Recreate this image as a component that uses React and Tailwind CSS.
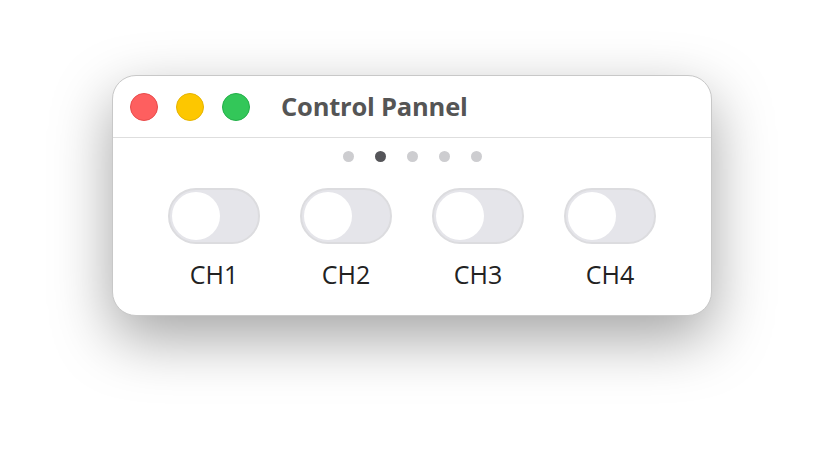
import React from "react"

const CHANNELS = ["CH1", "CH2", "CH3", "CH4"]

function Toggle() {
  return (
    <div className="w-[92px] h-[56px] rounded-full bg-[#e5e5ea] border-2 border-[#dcdcdf] flex items-center px-[2px]">
      <div className="w-[48px] h-[48px] rounded-full bg-white" />
    </div>
  )
}

export default function App() {
  return (
    <div className="w-[824px] h-[464px] bg-white flex justify-center pt-[75px]" style={{ fontFamily: '"Open Sans", "Noto Sans", sans-serif' }}>
      <div className="w-[600px] h-[241px] rounded-[24px] bg-white border border-[#c8c8c8] shadow-[0_22px_60px_rgba(0,0,0,0.36)] flex flex-col">
        <div className="h-[62px] border-b border-[#dedede] flex items-center pl-[17px]">
          <div className="flex gap-[18px]">
            <span className="w-[28px] h-[28px] rounded-full bg-[#fe5f5f] border border-[#e84a4a]" />
            <span className="w-[28px] h-[28px] rounded-full bg-[#fdc700] border border-[#e6b400]" />
            <span className="w-[28px] h-[28px] rounded-full bg-[#33c759] border border-[#22b048]" />
          </div>
          <span className="ml-[31px] text-[25.5px] font-bold text-[#555555] tracking-[-0.2px]">Control Pannel</span>
        </div>
        <div className="flex justify-center gap-[21px] mt-[13px]">
          {[0, 1, 2, 3, 4].map((i) => (
            <span key={i} className={`w-[11px] h-[11px] rounded-full ${i === 1 ? "bg-[#555559]" : "bg-[#cdcdd0]"}`} />
          ))}
        </div>
        <div className="flex justify-center gap-[40px] mt-[26px]">
          {CHANNELS.map((ch) => (
            <div key={ch} className="flex flex-col items-center">
              <Toggle />
              <span className="mt-[13px] text-[25px] leading-[34px] text-[#222222]">{ch}</span>
            </div>
          ))}
        </div>
      </div>
    </div>
  )
}
